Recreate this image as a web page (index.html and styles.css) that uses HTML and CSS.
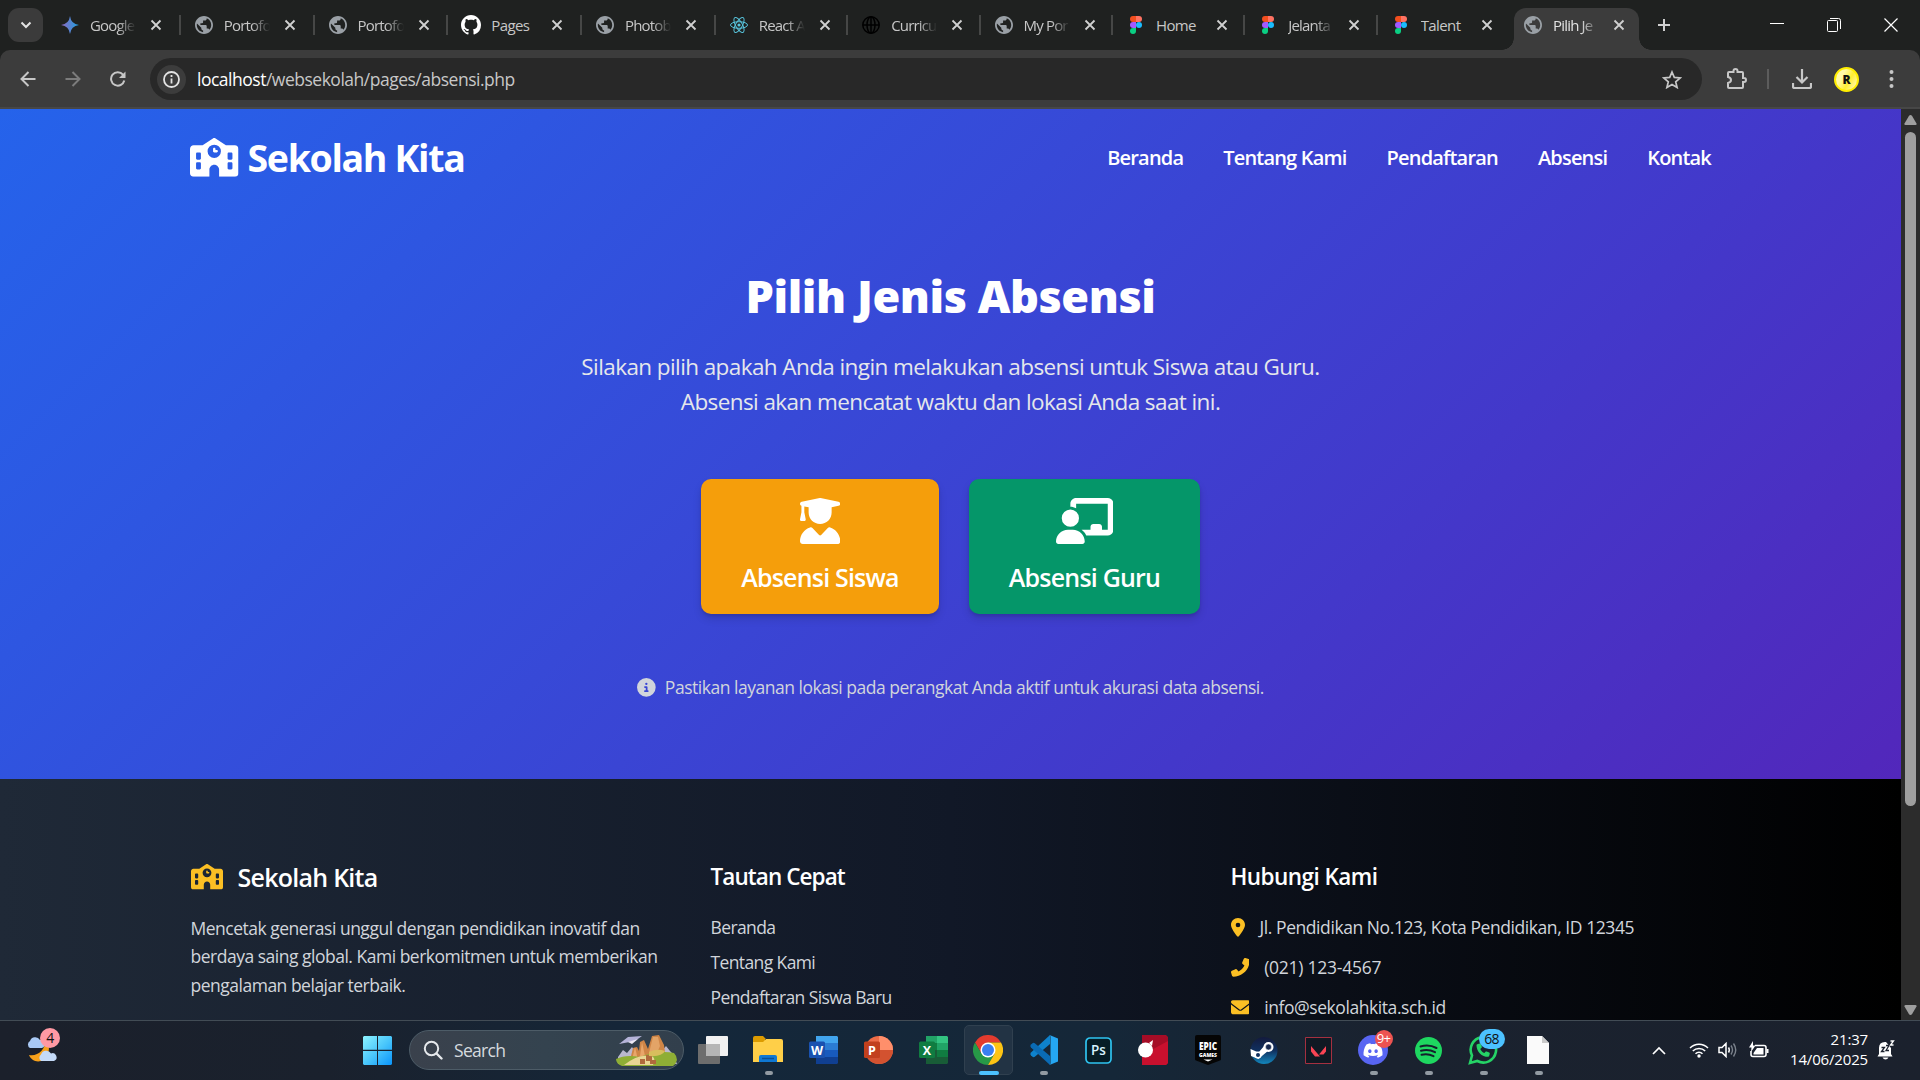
FILE: index.html
```html
<!DOCTYPE html>
<html lang="id">
<head>
<meta charset="utf-8">
<title>Pilih Jenis Absensi</title>
<link rel="stylesheet" href="styles.css">
</head>
<body>
<svg class="defs" aria-hidden="true">
  <symbol id="globe" viewBox="2 2 20 20"><path d="M12 2C6.48 2 2 6.48 2 12s4.48 10 10 10 10-4.48 10-10S17.52 2 12 2zm-1 17.93c-3.95-.49-7-3.85-7-7.93 0-.62.08-1.21.21-1.79L9 15v1c0 1.1.9 2 2 2v1.93zm6.9-2.54c-.26-.81-1-1.39-1.9-1.39h-1v-3c0-.55-.45-1-1-1H8v-2h2c.55 0 1-.45 1-1V7h2c1.1 0 2-.9 2-2v-.41c2.93 1.19 5 4.06 5 7.41 0 2.08-.8 3.97-2.1 5.39z"/></symbol>
  <symbol id="figma" viewBox="0 0 12 18"><path fill="#f24e1e" d="M3 0h3v6H3a3 3 0 0 1 0-6z"/><path fill="#ff7262" d="M6 0h3a3 3 0 0 1 0 6H6z"/><path fill="#a259ff" d="M3 6h3v6H3a3 3 0 0 1 0-6z"/><circle cx="9" cy="9" r="3" fill="#1abcfe"/><path fill="#0acf83" d="M3 12h3v3a3 3 0 1 1-3-3z"/></symbol>
  <symbol id="close" viewBox="0 0 12 12"><path d="M1.5 1.5l9 9M10.5 1.5l-9 9" fill="none" stroke="currentColor" stroke-width="1.8"/></symbol>
  <symbol id="school" viewBox="0 0 640 512"><path fill-rule="evenodd" d="M337.8 5.4C327-1.8 313-1.8 302.2 5.4L166.3 96H48C21.5 96 0 117.5 0 144V464c0 26.5 21.5 48 48 48H256V416c0-35.3 28.7-64 64-64s64 28.7 64 64v96H592c26.5 0 48-21.5 48-48V144c0-26.5-21.5-48-48-48H473.7L337.8 5.4zM96 192h32c8.8 0 16 7.2 16 16v64c0 8.8-7.2 16-16 16H96c-8.8 0-16-7.2-16-16V208c0-8.8 7.2-16 16-16zm400 16c0-8.8 7.2-16 16-16h32c8.8 0 16 7.2 16 16v64c0 8.8-7.2 16-16 16H512c-8.8 0-16-7.2-16-16V208zM96 320h32c8.8 0 16 7.2 16 16v64c0 8.8-7.2 16-16 16H96c-8.8 0-16-7.2-16-16V336c0-8.8 7.2-16 16-16zm400 16c0-8.8 7.2-16 16-16h32c8.8 0 16 7.2 16 16v64c0 8.8-7.2 16-16 16H512c-8.8 0-16-7.2-16-16V336zM232 176a88 88 0 1 1 176 0 88 88 0 1 1 -176 0zm88-48c-8.8 0-16 7.2-16 16v32c0 8.8 7.2 16 16 16h32c8.8 0 16-7.2 16-16s-7.2-16-16-16H336V144c0-8.8-7.2-16-16-16z"/></symbol>
</svg>

<div class="tabstrip">
  <div class="tab-search"><svg width="12" height="8" viewBox="0 0 12 8"><path d="M1.5 1.5L6 6l4.5-4.5" fill="none" stroke="#e3e3e3" stroke-width="2"/></svg></div>
  <div class="tab"><svg class="fav" viewBox="0 0 18 18"><defs><linearGradient id="gem"><stop offset="0" stop-color="#9168c0"/><stop offset=".5" stop-color="#5684d1"/><stop offset="1" stop-color="#1ba1e3"/></linearGradient></defs><path fill="url(#gem)" d="M9 0q1 8 9 9-8 1-9 9-1-8-9-9 8-1 9-9z"/></svg><span class="title">Google</span><svg class="x"><use href="#close"/></svg></div>
  <div class="tab"><svg class="fav"><use href="#globe"/></svg><span class="title">Portofo</span><svg class="x"><use href="#close"/></svg></div>
  <div class="tab"><svg class="fav"><use href="#globe"/></svg><span class="title">Portofo</span><svg class="x"><use href="#close"/></svg></div>
  <div class="tab"><svg class="fav gh" viewBox="0 0 16 16"><path fill="#fff" d="M8 0C3.58 0 0 3.58 0 8c0 3.54 2.29 6.53 5.47 7.59.4.07.55-.17.55-.38 0-.19-.01-.82-.01-1.49-2.01.37-2.53-.49-2.69-.94-.09-.23-.48-.94-.82-1.13-.28-.15-.68-.52-.01-.53.63-.01 1.08.58 1.23.82.72 1.21 1.87.87 2.33.66.07-.52.28-.87.51-1.07-1.78-.2-3.64-.89-3.64-3.95 0-.87.31-1.59.82-2.15-.08-.2-.36-1.02.08-2.12 0 0 .67-.21 2.2.82.64-.18 1.32-.27 2-.27.68 0 1.36.09 2 .27 1.53-1.04 2.2-.82 2.2-.82.44 1.1.16 1.92.08 2.12.51.56.82 1.27.82 2.15 0 3.07-1.87 3.75-3.65 3.95.29.25.54.73.54 1.48 0 1.07-.01 1.93-.01 2.2 0 .21.15.46.55.38A8.013 8.013 0 0 0 16 8c0-4.42-3.58-8-8-8z"/></svg><span class="title whole">Pages</span><svg class="x"><use href="#close"/></svg></div>
  <div class="tab"><svg class="fav"><use href="#globe"/></svg><span class="title">Photob</span><svg class="x"><use href="#close"/></svg></div>
  <div class="tab"><svg class="fav" viewBox="-9 -9 18 18"><g fill="none" stroke="#58c4dc" stroke-width="1"><ellipse rx="8.5" ry="3.3"/><ellipse rx="8.5" ry="3.3" transform="rotate(60)"/><ellipse rx="8.5" ry="3.3" transform="rotate(120)"/></g><circle r="1.6" fill="#58c4dc"/></svg><span class="title">React A</span><svg class="x"><use href="#close"/></svg></div>
  <div class="tab"><svg class="fav" viewBox="-9 -9 18 18"><g fill="none" stroke="#000" stroke-width="1.5"><circle r="8.2"/><ellipse rx="4" ry="8.2"/><path d="M0-8V8M-8 0H8"/></g></svg><span class="title">Curricu</span><svg class="x"><use href="#close"/></svg></div>
  <div class="tab"><svg class="fav"><use href="#globe"/></svg><span class="title">My Por</span><svg class="x"><use href="#close"/></svg></div>
  <div class="tab"><svg class="fav"><use href="#figma"/></svg><span class="title whole">Home</span><svg class="x"><use href="#close"/></svg></div>
  <div class="tab"><svg class="fav"><use href="#figma"/></svg><span class="title">Jelanta</span><svg class="x"><use href="#close"/></svg></div>
  <div class="tab last"><svg class="fav"><use href="#figma"/></svg><span class="title whole">Talent</span><svg class="x"><use href="#close"/></svg></div>
  <div class="tab active"><svg class="fav"><use href="#globe"/></svg><span class="title">Pilih Je</span><svg class="x"><use href="#close"/></svg></div>
  <svg class="plus" width="14" height="14" viewBox="0 0 14 14"><path d="M7 1v12M1 7h12" stroke="#d0d0d0" stroke-width="2"/></svg>
  <div class="window-buttons">
    <svg width="14" height="14" viewBox="0 0 14 14"><path d="M0 5.5h14" stroke="#fff"/></svg>
    <svg width="14" height="14" viewBox="0 0 14 14"><path d="M.5 3.5a1 1 0 0 1 1-1h8a1 1 0 0 1 1 1v9a1 1 0 0 1-1 1h-8a1 1 0 0 1-1-1zM3 .5h8.500a2 2 0 0 1 2 2V11" fill="none" stroke="#fff"/></svg>
    <svg width="14" height="14" viewBox="0 0 14 14"><path d="M.5.5l13 13M13.500.5l-13 13" stroke="#fff" stroke-width="1.2"/></svg>
  </div>
</div>

<div class="toolbar">
  <div class="nav-buttons">
    <svg width="16" height="16" viewBox="0 0 16 16"><path d="M15.5 8H2M8.500 1L1.500 8l7 7" fill="none" stroke="#c7c7c7" stroke-width="2"/></svg>
    <svg width="16" height="16" viewBox="0 0 16 16"><path d="M.5 8H14M7.500 1l7 7-7 7" fill="none" stroke="#7c7c7c" stroke-width="2"/></svg>
    <svg width="16" height="16" viewBox="0 0 16 16"><path d="M14.300 9.500A6.700 6.700 0 1 1 13 3.700l1.500 1.800" fill="none" stroke="#c7c7c7" stroke-width="2"/><path d="M15.500.5V7H9z" fill="#c7c7c7"/></svg>
  </div>
  <div class="omnibox">
    <div class="site-info"><svg width="17" height="17" viewBox="0 0 17 17"><circle cx="8.500" cy="8.500" r="7.500" fill="none" stroke="#e3e3e3" stroke-width="1.800"/><path d="M8.500 7.500v5M8.500 4v2" stroke="#e3e3e3" stroke-width="1.800"/></svg></div>
    <span class="url"><b>localhost</b>/websekolah/pages/absensi.php</span>
    <svg class="star" width="20" height="19" viewBox="0 0 20 19"><path d="M10 2l2.300 5.400 5.900.5-4.500 3.900 1.400 5.700-5.100-3-5.100 3 1.400-5.700L1.800 7.900l5.900-.5z" fill="none" stroke="#c7c7c7" stroke-width="1.700"/></svg>
  </div>
  <div class="actions">
    <svg width="22" height="22" viewBox="0 0 22 22"><path d="M2 5a1 1 0 0 1 1-1h4.500V3a2 2 0 0 1 4 0v1H16a1 1 0 0 1 1 1v5h1a2 2 0 0 1 0 4h-1v5a1 1 0 0 1-1 1H3a1 1 0 0 1-1-1v-4c4-1 4-5 0-6z" fill="none" stroke="#c7c7c7" stroke-width="2"/></svg>
    <i class="sep"></i>
    <svg width="20" height="20" viewBox="0 0 20 20"><path d="M10 0v13M4.500 8l5.500 5.500L15.500 8M1 14v3.500a1.500 1.500 0 0 0 1.500 1.500h15a1.500 1.500 0 0 0 1.500-1.500V14" fill="none" stroke="#c7c7c7" stroke-width="2.200"/></svg>
    <div class="avatar">R</div>
    <svg width="5" height="20" viewBox="0 0 5 20"><g fill="#c7c7c7"><circle cx="2.500" cy="3" r="2"/><circle cx="2.500" cy="10" r="2"/><circle cx="2.500" cy="17" r="2"/></g></svg>
  </div>
</div>

<div class="viewport">
  <div class="page">
    <main class="hero">
      <header class="site-header">
        <a class="brand"><svg width="48.500" height="38.800"><use href="#school"/></svg><span>Sekolah Kita</span></a>
        <nav class="menu"><a>Beranda</a><a>Tentang Kami</a><a>Pendaftaran</a><a>Absensi</a><a>Kontak</a></nav>
      </header>
      <h1>Pilih Jenis Absensi</h1>
      <p class="lead">Silakan pilih apakah Anda ingin melakukan absensi untuk Siswa atau Guru.<br>Absensi akan mencatat waktu dan lokasi Anda saat ini.</p>
      <div class="cards">
        <a class="card student"><svg width="40.250" height="46" viewBox="0 0 448 512"><path d="M219.300.5c3.100-.6 6.300-.6 9.400 0l200 40C439.900 42.700 448 52.600 448 64s-8.100 21.300-19.300 23.500L352 102.900V160c0 70.700-57.300 128-128 128s-128-57.300-128-128V102.900L48 93.300v65.100l15.700 78.400c.9 4.700-.3 9.600-3.300 13.300s-7.600 5.900-12.400 5.900H16c-4.800 0-9.300-2.100-12.400-5.900s-4.300-8.600-3.300-13.300L16 158.400V86.600C6.500 83.300 0 74.300 0 64C0 52.600 8.100 42.700 19.300 40.500l200-40zM111.900 327.700c10.500-3.400 21.800.4 29.400 8.500l71 75.500c6.300 6.700 17 6.700 23.300 0l71-75.500c7.600-8.100 18.900-11.900 29.400-8.500C401 348.600 448 409.400 448 481.300c0 17-13.800 30.700-30.700 30.700H30.700C13.800 512 0 498.200 0 481.300c0-71.900 47-132.700 111.900-153.600z"/></svg><span>Absensi Siswa</span></a>
        <a class="card teacher"><svg width="57.500" height="46" viewBox="0 0 640 512"><path d="M160 64c0-35.300 28.700-64 64-64H576c35.300 0 64 28.700 64 64V352c0 35.300-28.700 64-64 64H336.800c-11.800-25.500-29.900-47.500-52.400-64H384V320c0-17.700 14.300-32 32-32h64c17.700 0 32 14.300 32 32v32h64V64L224 64v49.100C205.200 102.200 183.300 96 160 96V64zm0 64a96 96 0 1 1 0 192 96 96 0 1 1 0-192zM133.300 352h53.300C260.300 352 320 411.700 320 485.300c0 14.700-11.900 26.700-26.700 26.700H26.700C11.900 512 0 500.100 0 485.300C0 411.700 59.700 352 133.300 352z"/></svg><span>Absensi Guru</span></a>
      </div>
      <p class="note"><svg width="18.700" height="18.700" viewBox="0 0 512 512"><path fill-rule="evenodd" d="M256 512A256 256 0 1 0 256 0a256 256 0 1 0 0 512zM216 336h24V272H216c-13.300 0-24-10.700-24-24s10.700-24 24-24h48c13.300 0 24 10.700 24 24v88h8c13.300 0 24 10.700 24 24s-10.700 24-24 24H216c-13.300 0-24-10.700-24-24s10.700-24 24-24zm40-208a32 32 0 1 1 0 64 32 32 0 1 1 0-64z"/></svg><span>Pastikan layanan lokasi pada perangkat Anda aktif untuk akurasi data absensi.</span></p>
    </main>
    <footer class="site-footer">
      <section>
        <h2 class="foot-brand"><svg width="32" height="25.600"><use href="#school"/></svg><span>Sekolah Kita</span></h2>
        <p class="about">Mencetak generasi unggul dengan pendidikan inovatif dan<br>berdaya saing global. Kami berkomitmen untuk memberikan<br>pengalaman belajar terbaik.</p>
      </section>
      <section>
        <h3 class="tight">Tautan Cepat</h3>
        <ul class="links"><li>Beranda</li><li>Tentang Kami</li><li>Pendaftaran Siswa Baru</li></ul>
      </section>
      <section>
        <h3>Hubungi Kami</h3>
        <ul class="contacts">
          <li><svg width="14" height="18.700" viewBox="0 0 384 512"><path fill-rule="evenodd" d="M215.700 499.200C267 435 384 279.400 384 192C384 86 298 0 192 0S0 86 0 192c0 87.400 117 243 168.300 307.200c12.300 15.300 35.100 15.300 47.400 0zM192 128a64 64 0 1 1 0 128 64 64 0 1 1 0-128z"/></svg><span>Jl. Pendidikan No.123, Kota Pendidikan, ID 12345</span></li>
          <li><svg width="18.700" height="18.700" viewBox="0 0 512 512"><path d="M347.100 24.600c7.700-18.600 28-28.500 47.400-23.200l88 24C499.900 30.200 512 46 512 64c0 247.400-200.600 448-448 448c-18 0-33.800-12.100-38.600-29.500l-24-88c-5.300-19.400 4.600-39.700 23.200-47.400l96-40c16.300-6.800 35.200-2.100 46.300 11.600L207.300 368c70.400-33.300 127.400-90.300 160.700-160.700L318.700 167c-13.700-11.200-18.400-30-11.600-46.300l40-96z"/></svg><span class="phone">(021) 123-4567</span></li>
          <li><svg width="18.700" height="18.700" viewBox="0 0 512 512"><path d="M48 64C21.500 64 0 85.500 0 112c0 15.100 7.100 29.300 19.200 38.400L236.800 313.600c11.400 8.500 27 8.500 38.400 0L492.800 150.400c12.100-9.100 19.200-23.300 19.200-38.400c0-26.500-21.500-48-48-48H48zM0 176V384c0 35.300 28.700 64 64 64H448c35.300 0 64-28.700 64-64V176L294.400 339.200c-22.800 17.100-54 17.100-76.800 0L0 176z"/></svg><span>info@sekolahkita.sch.id</span></li>
        </ul>
      </section>
    </footer>
  </div>
  <div class="scrollbar">
    <svg width="13" height="10" viewBox="0 0 13 10"><path d="M6.500 0q1 0 1.600 1l4.400 7.500q.5 1.500-1 1.500H1.500Q0 10 .5 8.500L4.900 1q.6-1 1.600-1z" fill="#9f9f9f"/></svg>
    <div class="thumb"></div>
    <svg class="down" width="13" height="10" viewBox="0 0 13 10"><path d="M6.500 0q1 0 1.600 1l4.400 7.500q.5 1.500-1 1.500H1.500Q0 10 .5 8.500L4.900 1q.6-1 1.600-1z" fill="#9f9f9f"/></svg>
  </div>
</div>

<div class="taskbar">
  <div class="weather">
    <svg width="32" height="32" viewBox="0 0 32 32"><path d="M20 4c5 6 4 20-5 23-5 1.500-10-1-12-6 8 2 17-5 17-17z" fill="#f7a11b"/><path d="M4 14a4 4 0 0 1 0-7 5.500 5.500 0 0 1 10-1 4 4 0 0 1 2 8z" fill="#a9c9f5"/><path d="M15 27a4 4 0 0 1 0-6.500 5.500 5.500 0 0 1 10-1A4 4 0 0 1 28 27z" fill="#c4daf8"/></svg>
    <span class="badge pink">4</span>
  </div>
  <svg class="start" width="29" height="29" viewBox="0 0 29 29"><defs><linearGradient id="win" x2="1" y2="1"><stop stop-color="#8df3ff"/><stop offset=".5" stop-color="#4cc8fb"/><stop offset="1" stop-color="#0a94fb"/></linearGradient></defs><path fill="url(#win)" d="M1 0h13v13.700H0V1zM15 0h13l1 1v12.700H15zM0 15h14v14H1l-1-1zM15 15h14v13l-1 1H15z"/></svg>
  <div class="search">
    <svg width="20" height="20" viewBox="0 0 20 20"><circle cx="8.500" cy="8.500" r="6.700" fill="none" stroke="#e6e9ec" stroke-width="2"/><path d="M13.500 13.500l5 5" stroke="#e6e9ec" stroke-width="2.400" stroke-linecap="round"/></svg>
    <span>Search</span>
    <svg class="scene" width="61" height="31" viewBox="0 0 61 31"><path d="M2 22l5-7 4 3 5-6 4 6h24l6-7 4 5 3 3 4 10H2z" fill="#b9b7cf"/><path d="M3 9l9-7 14-1-7 5z" fill="#b5b3d8"/><path d="M12 7l10-3-6 5z" fill="#eceaf6"/><path d="M14 25l3-12 4-1 2 4 1-9 4-2 4 9 4-13 7-1 5 10 2 14z" fill="#cf8546"/><path d="M33 18l4-16 5 0 2 9-4 9z" fill="#e3a467"/><path d="M19 12l3 13h-6zM26 7l3 14h-5z" fill="#e8a66a"/><path d="M0 24q10-5 24-2 18-7 34-4 3 3 3 7-1 4-4 6H6q-6-2-6-7z" fill="#8fae35"/><path d="M8 30q14-11 25-9 8 0 4 9z" fill="#e8d594"/><path d="M30 20h6v6h-6zM24 24h5v5h-5zM34 25h6v4h-6z" fill="#b06a3c"/><path d="M33 17q8-4 16-1-3 6-16 5z" fill="#d8be5d"/></svg>
  </div>
  <div class="apps">
    <div class="app"><svg width="30" height="28" viewBox="0 0 30 28"><rect x="8" width="22" height="20" rx="1" fill="#f1f1f1"/><rect y="8" width="22" height="20" rx="1" fill="#6d6d6d"/><path d="M8 8h14v12H8z" fill="#b5b5b5"/></svg></div>
    <div class="app run"><svg width="30" height="28" viewBox="0 0 30 28"><path d="M0 2q0-2 2-2h8l3 3h-1v6H0z" fill="#dc9b00"/><path d="M0 6h10l3-3h15q2 0 2 2v21H0z" fill="#ffcf48"/><path d="M6 26v-5q0-2 2-2h14q2 0 2 2v5z" fill="#0f78d4"/><path d="M9 22.500h12" stroke="#0a4f96" stroke-width="1.500"/></svg></div>
    <div class="app"><svg width="29" height="28" viewBox="0 0 29 28"><path d="M7 0h21l1 1v6H7z" fill="#41a5ee"/><path d="M7 7h22v7H7z" fill="#2b7cd3"/><path d="M7 14h22v7H7z" fill="#185abd"/><path d="M7 21h22v6l-1 1H7z" fill="#103f91"/><rect y="5.500" width="16" height="16.500" rx="1.500" fill="#1a52b0"/><text x="8" y="18.500" class="glyph">W</text></svg></div>
    <div class="app"><svg width="29" height="28" viewBox="0 0 29 28"><circle cx="15" cy="14" r="14" fill="#ed6c47"/><path d="M15 0a14 14 0 0 1 14 14H15z" fill="#ff8f6b"/><path d="M1 14h28a14 14 0 0 1-28 0z" fill="#d35230"/><rect y="5.500" width="16" height="16.500" rx="1.500" fill="#c2401d"/><text x="8" y="18.500" class="glyph">P</text></svg></div>
    <div class="app"><svg width="29" height="28" viewBox="0 0 29 28"><path d="M7 0h11v7H7z" fill="#21a366"/><path d="M18 0h10l1 1v6H18z" fill="#33c481"/><path d="M7 7h11v7H7z" fill="#107c41"/><path d="M18 7h11v7H18z" fill="#21a366"/><path d="M7 14h22v13l-1 1H7z" fill="#185c37"/><path d="M18 14h11v7H18z" fill="#107c41"/><rect y="5.500" width="16" height="16.500" rx="1.500" fill="#107c41"/><text x="8" y="18.500" class="glyph">X</text></svg></div>
    <div class="app run current"><svg width="30" height="30" viewBox="-15 -15 30 30"><path d="M0-7.500H13A15 15 0 0 0-13-7.500L-6.500 3.750z" fill="#e33b2e"/><path d="M-13-7.500A15 15 0 0 0 0 15L6.500 3.750H-6.500z" fill="#279847"/><path d="M0 15A15 15 0 0 0 13-7.500H0L6.500 3.750z" fill="#fdc414"/><circle r="7.500" fill="#fff"/><circle r="6" fill="#3a7ff0"/></svg></div>
    <div class="app run"><svg width="30" height="30" viewBox="0 0 30 30"><path d="M22 0l-19 17.500q-1.500 1.500 0 3l1.500 1.300q1 .8 2.300 0L22 9z" fill="#0e82cc"/><path d="M22 30L3 12.500Q1.500 11 3 9.500l1.500-1.300q1-.8 2.300 0L22 21z" fill="#0a6bb5"/><path d="M21.500 0L30 3.500v23L21.500 30q1-.5 1-2V2q0-1.500-1-2z" fill="#25a6f2"/></svg></div>
    <div class="app"><svg width="27" height="27" viewBox="0 0 27 27"><rect x="1" y="1" width="25" height="25" rx="4" fill="#061d26" stroke="#2fc3ef" stroke-width="1.700"/><text x="13.500" y="18" class="glyph ps">Ps</text></svg></div>
    <div class="app"><svg width="30" height="30" viewBox="0 0 30 30"><path d="M4 0h24l2 2v26l-2 2H4z" fill="#a50c26"/><path d="M4 30V20L30 6v22l-2 2z" fill="#c8102e"/><circle cx="7.500" cy="15" r="7.500" fill="#fff"/><path d="M11 8l4-3-1 6z" fill="#fff"/></svg></div>
    <div class="app"><svg width="26" height="30" viewBox="0 0 26 30"><path d="M2 0h22q2 0 2 2v22q0 1-1 1.500L13 30 1 25.500Q0 25 0 24V2q0-2 2-2z" fill="#050505"/><text x="13" y="15" class="glyph epic" textLength="18" lengthAdjust="spacingAndGlyphs">EPIC</text><text x="13" y="21.500" class="glyph games" textLength="18" lengthAdjust="spacingAndGlyphs">GAMES</text><path d="M8.500 24.500h9L13 26.500z" fill="#fff"/></svg></div>
    <div class="app"><svg width="29" height="27" viewBox="0 0 29 27"><defs><linearGradient id="stm" x2="0" y2="1"><stop stop-color="#131a3d"/><stop offset=".5" stop-color="#10305f"/><stop offset="1" stop-color="#1387bd"/></linearGradient></defs><circle cx="15" cy="13.500" r="13.500" fill="url(#stm)"/><path d="M1.500 12l8 3.500 6-7 4 5-6 5-4 3.500-7.500-3z" fill="#fff"/><circle cx="9" cy="18" r="3.500" fill="#fff"/><circle cx="9" cy="18" r="2" fill="#10305f"/><circle cx="19.500" cy="10" r="5" fill="#fff"/><circle cx="19.500" cy="10" r="3" fill="#16284f" stroke="#fff" stroke-width=".5"/></svg></div>
    <div class="app"><svg width="27" height="27" viewBox="0 0 27 27"><path d="M.5.5h26v26H.5z" fill="#101923" stroke="#a53040"/><path d="M6 9l9 10.500h-5L6 14.500zM21 9v5.500l-2.500 3h-4.500z" fill="#fa4454"/></svg></div>
    <div class="app run"><svg width="30" height="30" viewBox="0 0 30 30"><circle cx="15" cy="15" r="15" fill="#5865f2"/><g transform="translate(5.500 6) scale(.79)"><path fill="#fff" fill-rule="evenodd" d="M20.317 4.370a19.800 19.800 0 0 0-4.885-1.515.074.074 0 0 0-.079.037c-.211.375-.445.865-.608 1.250-1.845-.276-3.680-.276-5.487 0-.164-.393-.406-.874-.618-1.250a.077.077 0 0 0-.078-.037A19.740 19.740 0 0 0 3.677 4.370C.533 9.046-.319 13.580.099 18.058c2.053 1.508 4.072 2.479 6.077 3.058.462-.63.957-1.322 1.310-2.021-.695-.272-1.316-.574-1.914-.998l.443-.419c3.928 1.793 8.259 1.793 12.140 0l.45.419c-.6.424-1.220.726-1.915.998.360.698.772 1.391 1.310 2.021 1.961-.607 3.980-1.550 6.033-3.058.5-5.177-.838-9.674-3.716-13.688zM8.020 15.331c-1.182 0-2.157-1.086-2.157-2.419s.956-2.419 2.157-2.419 2.176 1.095 2.157 2.419c0 1.333-.956 2.419-2.157 2.419zm7.975 0c-1.183 0-2.157-1.086-2.157-2.419s.955-2.419 2.157-2.419 2.176 1.095 2.157 2.419c0 1.333-.946 2.419-2.157 2.419z"/></g></svg><span class="badge red">9+</span></div>
    <div class="app run"><svg width="27" height="27" viewBox="0 0 27 27"><circle cx="13.500" cy="13.500" r="13.500" fill="#1ed760"/><path d="M5.500 9.500q8.500-2.500 16 1.500M6 13.700q7.500-2 14 1.500M6.500 17.800q6.500-1.500 12 1.400" fill="none" stroke="#14202c" stroke-width="2" stroke-linecap="round"/></svg></div>
    <div class="app run"><svg width="30" height="30" viewBox="0 0 30 30"><path d="M2 28l2-7.500A12.700 12.700 0 1 1 9.300 26z" fill="none" stroke="#25d366" stroke-width="2.600"/><g transform="translate(8.500 8.500) scale(.026)"><path fill="#25d366" d="M164.900 24.600c-7.700-18.600-28-28.500-47.400-23.200l-88 24C12.100 30.200 0 46 0 64C0 311.400 200.600 512 448 512c18 0 33.800-12.100 38.600-29.500l24-88c5.300-19.400-4.600-39.700-23.200-47.400l-96-40c-16.300-6.800-35.200-2.100-46.300 11.600L304.700 368C234.300 334.700 177.300 277.700 144 207.300L193.300 167c13.700-11.200 18.400-30 11.600-46.300l-40-96z"/></g></svg><span class="badge blue">68</span></div>
    <div class="app run"><svg width="22" height="28" viewBox="0 0 22 28"><path d="M0 0h15l7 7v21H0z" fill="#fafafa"/><path d="M15 0l7 7h-7z" fill="#c9c9c9"/></svg></div>
  </div>
  <div class="tray">
    <svg width="14" height="9" viewBox="0 0 14 9"><path d="M1 8l6-6 6 6" fill="none" stroke="#fff" stroke-width="1.700"/></svg>
    <svg width="20" height="16" viewBox="0 0 20 16"><g fill="none" stroke="#fff" stroke-width="1.500"><path d="M1 6a12.700 12.700 0 0 1 18 0M3.800 9a8.700 8.700 0 0 1 12.400 0M6.500 11.800a5 5 0 0 1 7 0"/></g><circle cx="10" cy="14" r="1.700" fill="#fff"/></svg>
    <svg width="20" height="16" viewBox="0 0 20 16"><path d="M1 5.500h3l4-4v13l-4-4H1zM10.500 5.500q1.500 2.500 0 5" fill="none" stroke="#fff" stroke-width="1.500"/><path d="M13 3.500q3 4.500 0 9M15.500 1.500q4.500 6.500 0 13" fill="none" stroke="#7b828c" stroke-width="1.400"/></svg>
    <svg width="20" height="18" viewBox="0 0 20 18"><path d="M6 4.500h9a2 2 0 0 1 2 2v7a2 2 0 0 1-2 2H4a2 2 0 0 1-2-2V10" fill="none" stroke="#fff" stroke-width="1.600"/><path d="M17.500 8h2v4h-2zM8 7h6.500v6.500H4.500V12z" fill="#fff"/><path d="M4 0L0 6.500h2.500L2 11l4.500-6.500H4z" fill="#fff"/></svg>
    <div class="clock"><span>21:37</span><span>14/06/2025</span></div>
    <svg width="18" height="20" viewBox="0 0 18 20"><path d="M2 14V8q0-6 6-6h1l5 6v6l1.500 2.500H.5z" fill="#fff"/><path d="M5.500 17.500h6q-1 2-3 2t-3-2z" fill="#fff"/><path d="M4.500 7.500h3l-3 4h3M9 5.500h3l-3 5h3" fill="none" stroke="#1b212d" stroke-width="1.300"/><path d="M13.500 1h3l-3 4h3" fill="none" stroke="#fff" stroke-width="1.300"/></svg>
  </div>
</div>
</body>
</html>
```
FILE: styles.css
```css
* { box-sizing: border-box; }
body {
  margin: 0;
  height: 1080px;
  overflow: hidden;
  display: flex;
  flex-direction: column;
  background: #1f2120;
  font-family: "Open Sans", "Noto Sans", sans-serif;
  white-space: nowrap;
}
svg { display: block; flex: none; }
h1, h2, h3, p, ul { margin: 0; padding: 0; }
ul { list-style: none; }
.defs { position: absolute; width: 0; height: 0; }

/* Browser tabs */
.tabstrip { display: flex; height: 50px; flex: none; padding-left: 8px; background: #1f2120; }
.tab-search {
  width: 35px; height: 34px; margin: 8px 4px 0 0; border-radius: 11px; background: #3b3b3b;
  display: flex; align-items: center; justify-content: center;
}
.tab {
  position: relative; width: 132.4px; height: 50px; flex: none; padding-left: 14px;
  display: flex; align-items: center; color: #c7c7c7; font-size: 15px;
}
.tab:nth-child(-n+6) { width: 133.75px; }
.tab:not(.active):not(.last)::after { content: ""; width: 2px; height: 20px; margin: 0 0 0 auto; background: #464746; }
.fav { width: 18px; height: 18px; fill: #9aa0a6; }
.fav.gh { width: 20px; height: 20px; margin: 0 -1px; }
.title {
  width: 46px; margin-left: 11px; overflow: hidden; letter-spacing: -.055em; line-height: 22px;
  -webkit-mask-image: linear-gradient(90deg, #000 60%, transparent);
  mask-image: linear-gradient(90deg, #000 60%, transparent);
}
.title.whole { -webkit-mask-image: none; mask-image: none; letter-spacing: -.04em; }
.x { width: 12px; height: 12px; margin-left: 14px; color: #d0d0d0; }
.tab.active { width: 133px; color: #e3e3e3; }
.tab.active::before {
  content: ""; position: absolute; z-index: 0; left: 4px; top: 8px; width: 125px; height: 42px;
  border-radius: 12px 12px 0 0; background: #3c3c3c;
}
.tab.active::after {
  content: ""; position: absolute; left: -8px; top: 38px; width: 149px; height: 12px;
  background:
    radial-gradient(circle at 0 0, transparent 11.5px, #3c3c3c 12px) left / 12px 12px no-repeat,
    radial-gradient(circle at 100% 0, transparent 11.5px, #3c3c3c 12px) right / 12px 12px no-repeat;
}
.tab.active > * { position: relative; z-index: 1; }
.plus { margin: 18px 0 0 14px; }
.window-buttons { display: flex; gap: 43px; margin: 18px 22px 0 auto; }

/* Browser toolbar */
.toolbar {
  display: flex; align-items: center; height: 59px; flex: none; padding: 1px 0 0 20px;
  background: #3c3c3c; border-bottom: 2px solid #474747; border-radius: 10px 10px 0 0;
}
.nav-buttons { display: flex; gap: 29px; width: 130px; flex: none; }
.omnibox { display: flex; align-items: center; flex: none; width: 1552px; height: 42px; border-radius: 21px; background: #282828; padding: 0 20px 0 7px; }
.site-info { width: 29px; height: 29px; border-radius: 50%; background: #3c3c3c; display: flex; align-items: center; justify-content: center; }
.url { margin-left: 11px; color: #c7c7c7; font-size: 17.5px; letter-spacing: -.028em; }
.url b { font-weight: 400; color: #fff; }
.star { margin-left: auto; }
.actions { display: flex; align-items: center; flex: none; padding-left: 24px; }
.sep { width: 2px; height: 20px; margin: 0 23px 0 19px; background: #5c5c5c; }
.avatar {
  width: 25px; height: 25px; margin: 0 30px 0 22px; border-radius: 50%; border: 2px solid #ffee00;
  background: linear-gradient(120deg, #fff9a8 30%, #ffee33 60%, #fffbd0); color: #111;
  font-size: 12px; line-height: 21px; font-weight: 800; text-align: center;
}

/* Page */
.viewport { display: flex; height: 911px; flex: none; overflow: hidden; }
.page { width: 1901px; }
.hero {
  height: 670px; padding: 0 190px; color: #fff; text-align: center;
  background: linear-gradient(135deg, #2563eb 0%, #4338ca 71%, #5227bb 100%);
}
.site-header { display: flex; justify-content: space-between; align-items: center; height: 97px; }
.brand { display: flex; align-items: center; gap: 9px; font-size: 37.5px; font-weight: 700; line-height: 50px; letter-spacing: -.0357em; fill: #fff; }
.menu { display: flex; gap: 40px; font-size: 20px; font-weight: 600; letter-spacing: -.0405em; }
h1 { margin-top: 67px; font-size: 45px; line-height: 45px; font-weight: 800; letter-spacing: -.0096em; }
.lead { margin-top: 31px; font-size: 22.5px; line-height: 35px; letter-spacing: -.0262em; color: #e5e7eb; }
.cards { display: flex; justify-content: center; gap: 30px; margin-top: 60px; }
.card {
  display: flex; flex-direction: column; align-items: center; gap: 16px; height: 135px; padding: 19px 40px;
  border-radius: 10px; font-size: 25px; line-height: 35px; font-weight: 600; letter-spacing: -.032em; fill: #fff;
  box-shadow: 0 5px 8px rgba(0, 0, 0, .12), 0 2px 3px rgba(0, 0, 0, .1);
}
.student { width: 238px; background: #f59e0b; }
.teacher { width: 231px; background: #059669; }
.note { display: flex; justify-content: center; align-items: center; gap: 9px; margin-top: 61px; font-size: 17.5px; line-height: 25px; letter-spacing: -.0276em; color: #d1d5db; fill: #d1d5db; }

.site-footer {
  display: grid; grid-template-columns: repeat(3, 480px); column-gap: 40px; height: 400px; padding: 80px 190.5px;
  color: #d1d5db; font-size: 17.5px; letter-spacing: -.0282em; background: linear-gradient(90deg, #1f2937, #111827 50%, #000);
}
.foot-brand { display: flex; align-items: center; gap: 15px; color: #fff; fill: #fbbf24; font-size: 25px; line-height: 36px; font-weight: 600; letter-spacing: -.0296em; }
h3 { color: #fff; font-size: 22.5px; line-height: 35px; font-weight: 600; letter-spacing: -.0245em; }
h3.tight { letter-spacing: -.041em; }
.about { margin-top: 19px; line-height: 28.4px; }
.links, .contacts { display: flex; flex-direction: column; gap: 10px; margin-top: 21px; line-height: 25px; }
.links { letter-spacing: -.035em; }
.contacts { gap: 15px; fill: #fbbf24; letter-spacing: -.0245em; }
.contacts li { display: flex; align-items: center; gap: 15px; }
.phone { letter-spacing: -.0145em; }

.scrollbar { display: flex; flex-direction: column; align-items: center; width: 19px; padding: 6px 0 5px; background: #2c2c2c; }
.thumb { width: 11px; height: 674px; margin-top: 7px; border-radius: 6px; background: #9f9f9f; }
.down { margin-top: auto; transform: rotate(180deg); }

/* Windows taskbar */
.taskbar {
  display: flex; align-items: center; height: 60px; flex: none; padding-bottom: 1px; border-top: 1px solid #424c55;
  background: linear-gradient(90deg, #1b202b 0, #1a212d 17%, #14273a 35%, #152738 58%, #1a222f 72%, #1b212d);
  color: #fff;
}
.weather { position: relative; width: 363px; padding-left: 26px; }
.badge { position: absolute; height: 20px; border-radius: 10px; text-align: center; font-size: 14px; line-height: 20px; letter-spacing: -.05em; }
.badge.pink { left: 40px; top: -6px; width: 20px; background: #ff99a4; color: #111; }
.badge.red { right: 8px; top: 5px; width: 18px; height: 18px; line-height: 17px; font-size: 13px; background: #ed5351; }
.badge.blue { right: 6px; top: 4px; width: 26px; background: #4cc2ff; color: #111; }
.search {
  display: flex; align-items: center; width: 275px; height: 40px; margin-left: 17px; padding: 0 6px 0 13px;
  border: 1px solid #4d5c67; border-radius: 20px; background: linear-gradient(90deg, #3a414c, #34434f 50%, #323f4c);
  font-size: 17.5px; color: #d5dade; letter-spacing: -.04em;
}
.search span { margin-left: 11px; }
.scene { margin-left: auto; }
.apps { display: flex; margin-left: 1.5px; }
.app { position: relative; width: 55px; height: 50px; display: flex; align-items: center; justify-content: center; }
.run::after { content: ""; position: absolute; left: 24px; bottom: 0; width: 8px; height: 4px; border-radius: 2px; background: #929aa2; }
.current::before { content: ""; position: absolute; inset: 0 3px; border: 1px solid #30404f; border-radius: 5px; background: #223344; z-index: 0; }
.current svg { position: relative; }
.current::after { left: 18px; width: 20px; background: #4cc2ff; }
.app .badge { z-index: 1; }
.glyph { fill: #fff; font: 700 12.5px "Open Sans", sans-serif; text-anchor: middle; }
.glyph.ps { font-size: 13.5px; font-weight: 600; fill: #d8f3ff; }
.glyph.epic { font-size: 11px; font-weight: 800; }
.glyph.games { font-size: 5.5px; font-weight: 800; }
.tray { display: flex; align-items: center; margin-left: auto; padding-right: 25px; }
.tray svg:nth-child(1) { margin-right: 23px; }
.tray svg:nth-child(2) { margin-right: 9px; }
.tray svg:nth-child(3) { margin-right: 11px; }
.clock { display: flex; flex-direction: column; align-items: flex-end; margin: 0 9px 2px 21px; font-size: 15px; line-height: 20px; letter-spacing: -.011em; }
```
